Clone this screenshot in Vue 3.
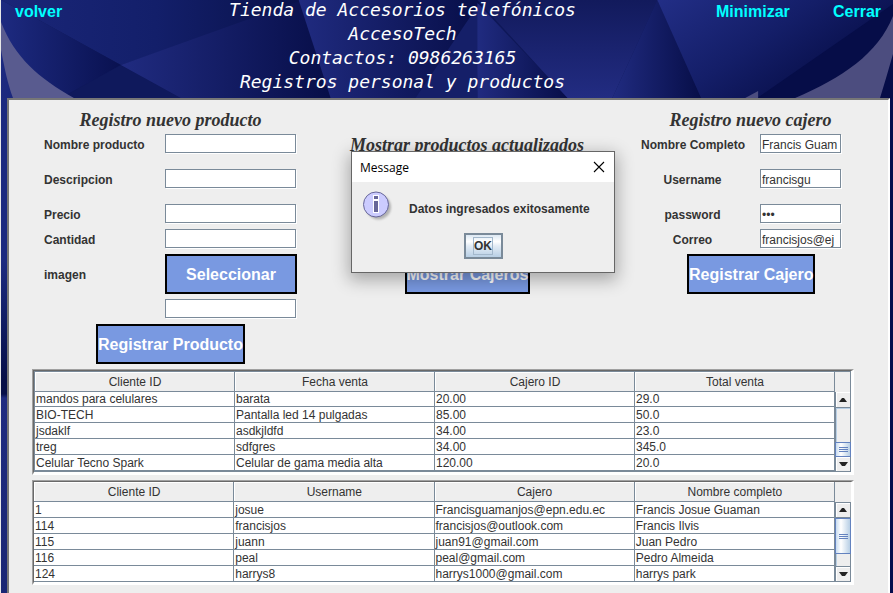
<script setup>
import { ref } from 'vue'

const productFields = [
  { id: 'nombre-producto', label: 'Nombre producto' },
  { id: 'descripcion', label: 'Descripcion' },
  { id: 'precio', label: 'Precio' },
  { id: 'cantidad', label: 'Cantidad' },
]

const cashierFields = ref([
  { id: 'nombre-completo', label: 'Nombre Completo', type: 'text', value: 'Francis Guam' },
  { id: 'username', label: 'Username', type: 'text', value: 'francisgu' },
  { id: 'password', label: 'password', type: 'password', value: '123' },
  { id: 'correo', label: 'Correo', type: 'text', value: 'francisjos@ej' },
])

const tables = [
  {
    name: 'productos',
    head: ['Cliente ID', 'Fecha venta', 'Cajero ID', 'Total venta'],
    rows: [
      ['mandos para celulares', 'barata', '20.00', '29.0'],
      ['BIO-TECH', 'Pantalla led 14 pulgadas', '85.00', '50.0'],
      ['jsdaklf', 'asdkjldfd', '34.00', '23.0'],
      ['treg', 'sdfgres', '34.00', '345.0'],
      ['Celular Tecno Spark', 'Celular de gama media alta', '120.00', '20.0'],
    ],
  },
  {
    name: 'cajeros',
    head: ['Cliente ID', 'Username', 'Cajero', 'Nombre completo'],
    rows: [
      ['1', 'josue', 'Francisguamanjos@epn.edu.ec', 'Francis Josue Guaman'],
      ['114', 'francisjos', 'francisjos@outlook.com', 'Francis Ilvis'],
      ['115', 'juann', 'juan91@gmail.com', 'Juan Pedro'],
      ['116', 'peal', 'peal@gmail.com', 'Pedro Almeida'],
      ['124', 'harrys8', 'harrys1000@gmail.com', 'harrys park'],
    ],
  },
]

const dialogOpen = ref(true)
</script>

<template>
  <div class="page">
    <header class="header">
      <svg class="backdrop" viewBox="0 0 893 98" preserveAspectRatio="none" aria-hidden="true">
        <defs>
          <linearGradient id="g1"><stop offset="0" stop-color="#1d2a80" /><stop offset="1" stop-color="#091150" /></linearGradient>
          <linearGradient id="g2"><stop offset="0" stop-color="#1a2678" /><stop offset=".5" stop-color="#131f6a" /><stop offset="1" stop-color="#081048" /></linearGradient>
          <linearGradient id="g3"><stop offset="0" stop-color="#202b80" /><stop offset="1" stop-color="#070e48" /></linearGradient>
          <linearGradient id="g4" x1="0" y1="0" x2="0" y2="1"><stop offset="0" stop-color="#121a5c" /><stop offset="1" stop-color="#222c82" /></linearGradient>
          <linearGradient id="g5" x1="0" y1="0" x2="1" y2=".6"><stop offset="0" stop-color="#222e86" /><stop offset=".5" stop-color="#141e68" /><stop offset="1" stop-color="#050b42" /></linearGradient>
        </defs>
        <rect width="893" height="98" fill="#0e1758" />
        <polygon points="0,0 310,0 120,65 38,20" fill="url(#g2)" />
        <polygon points="0,0 38,20 120,65 60,98 0,98" fill="url(#g1)" />
        <polygon points="120,65 60,98 180,98" fill="#0f195c" />
        <polygon points="120,65 310,-3 330,98 180,98" fill="url(#g3)" />
        <polygon points="298,0 480,0 477,98 330,98" fill="url(#g3)" />
        <polygon points="415,98 479,3 477,98" fill="#151f68" />
        <polygon points="477,0 657,0 612,98 567,98" fill="url(#g4)" />
        <polygon points="477,3 567,98 477,98" fill="url(#g3)" />
        <polygon points="657,0 701,98 612,98" fill="url(#g3)" />
        <polygon points="657,0 893,0 893,98 701,98" fill="url(#g5)" />
        <polygon points="893,4 893,98 757,98" fill="#060d48" />
        <path d="M0 22 C14 58 38 78 73 98 L12 98 C6 82 3 65 0 50Z" fill="#595b8f" />
        <path d="M893 16 C878 54 842 78 795 98 L880 98 C885 82 889 68 893 54Z" fill="#4c4d7f" />
        <path d="M745 98 L758 91 L758 98Z" fill="#4c4d7f" />
      </svg>
      <a class="nav-link" href="#volver">volver</a>
      <h1 class="title">
        <span>Tienda de Accesorios telefónicos</span>
        <span>AccesoTech</span>
        <span>Contactos: 0986263165</span>
        <span>Registros personal y productos</span>
      </h1>
      <nav class="window-links">
        <a class="nav-link" href="#minimizar">Minimizar</a>
        <a class="nav-link" href="#cerrar">Cerrar</a>
      </nav>
    </header>

    <main class="panel">
      <div class="forms">
        <form class="product" @submit.prevent>
          <h2 class="heading">Registro nuevo producto</h2>
          <div class="fields">
            <template v-for="f in productFields" :key="f.id">
              <label :for="f.id">{{ f.label }}</label>
              <input :id="f.id" type="text" />
            </template>
            <label class="tall" for="imagen">imagen</label>
            <button class="action" type="button">Seleccionar</button>
            <input id="imagen" class="second" type="text" />
          </div>
          <button class="action submit" type="submit">Registrar Producto</button>
        </form>

        <section class="middle">
          <h2 class="heading">Mostrar productos actualizados</h2>
          <button class="action" type="button">Mostrar Cajeros</button>

          <div v-if="dialogOpen" class="dialog" role="dialog" aria-labelledby="dialog-title">
            <div class="dialog-bar">
              <span id="dialog-title">Message</span>
              <button class="close" type="button" aria-label="Close" @click="dialogOpen = false">
                <svg width="12" height="12" viewBox="0 0 12 12"><path d="M1 1L11 11M11 1L1 11" stroke="#000" stroke-width="1.1" fill="none" /></svg>
              </button>
            </div>
            <div class="dialog-body">
              <svg class="info" width="32" height="32" viewBox="0 0 32 32" aria-hidden="true">
                <defs>
                  <filter id="soft" x="-30%" y="-30%" width="160%" height="160%"><feGaussianBlur stdDeviation="1.2" /></filter>
                </defs>
                <circle cx="15.5" cy="16" r="12.5" fill="#777" opacity=".5" filter="url(#soft)" />
                <circle cx="13" cy="13.5" r="12.5" fill="#ccccff" stroke="#666699" />
                <path d="M10 4h6v5h-6zM10 9h6v13h-6z" fill="#fff" />
                <path d="M11 5h4v3h-4zM11 10h4v11h-4z" fill="#666699" />
              </svg>
              <p>Datos ingresados exitosamente</p>
            </div>
            <button class="ok" type="button" @click="dialogOpen = false"><span>OK</span></button>
          </div>
        </section>

        <form class="cashier" @submit.prevent>
          <h2 class="heading">Registro nuevo cajero</h2>
          <div class="fields">
            <template v-for="f in cashierFields" :key="f.id">
              <label :for="f.id">{{ f.label }}</label>
              <input :id="f.id" v-model="f.value" :type="f.type" />
            </template>
          </div>
          <button class="action submit" type="submit">Registrar Cajero</button>
        </form>
      </div>

      <div class="tables">
        <div v-for="t in tables" :key="t.name" class="pane" :class="t.name">
          <div class="frame">
            <table>
              <thead>
                <tr><th v-for="h in t.head" :key="h">{{ h }}</th></tr>
              </thead>
              <tbody>
                <tr v-for="r in t.rows" :key="r[0]"><td v-for="(c, i) in r" :key="i">{{ c }}</td></tr>
              </tbody>
            </table>
            <div class="side">
              <div class="corner"></div>
              <div class="scroll">
                <button class="arrow" type="button" aria-label="Subir">
                  <svg width="8" height="4" viewBox="0 0 8 4"><path d="M0 4L3 0H5L8 4Z" fill="#222" /></svg>
                </button>
                <div class="track"><div class="thumb"><i></i><i></i><i></i></div></div>
                <button class="arrow down" type="button" aria-label="Bajar">
                  <svg width="9" height="4" viewBox="0 0 9 4"><path d="M0 0H9L6 4H3Z" fill="#222" /></svg>
                </button>
              </div>
            </div>
          </div>
        </div>
      </div>
    </main>
  </div>
</template>

<style>
body {
  margin: 0;
}
</style>

<style scoped>
* {
  box-sizing: border-box;
}

.page {
  display: flex;
  flex-direction: column;
  min-height: 100vh;
  overflow: hidden;
  border-left: 1px solid #e8e8e8;
  background: linear-gradient(#1c2a80 98px, #1c2a80 260px, #070f48 380px, #070f48 394px, #1f2b80 398px, #1a2674);
  font-family: "Liberation Sans", Arial, sans-serif;
  font-size: 12px;
  color: #333;
}

h1,
h2,
p {
  margin: 0;
}

.header {
  position: relative;
  display: grid;
  grid-template-columns: 88px 1fr 177px;
  height: 98px;
}

.backdrop {
  position: absolute;
  inset: 0;
  width: 100%;
  height: 100%;
}

.nav-link {
  position: relative;
  color: #0ff;
  font-size: 16px;
  font-weight: bold;
  line-height: 24px;
  text-decoration: none;
}

.header > .nav-link {
  padding-left: 14px;
}

.window-links {
  display: flex;
  justify-content: space-between;
  padding-right: 12px;
}

.title {
  position: relative;
  display: flex;
  flex-direction: column;
  justify-content: center;
  height: 92px;
  font-family: "DejaVu Sans Mono", monospace;
  font-size: 18px;
  font-style: italic;
  font-weight: normal;
  line-height: 24px;
  text-align: center;
  white-space: nowrap;
  color: #fff;
}

.panel {
  flex: 1;
  margin: 0 3px 0 6px;
  border: 2px solid #777;
  border-right-color: #fff;
  border-bottom: 0;
  background: #eee;
  box-shadow: 3px 0 0 #050c4c;
}

.forms {
  display: grid;
  grid-template-columns: 253px 1fr 201px;
  padding: 10px 46px 0 35px;
}

.heading {
  height: 24px;
  font-family: "Liberation Serif", "Times New Roman", serif;
  font-size: 18px;
  font-style: italic;
  font-weight: bold;
  line-height: 20px;
  text-align: center;
  white-space: nowrap;
}

.fields {
  display: grid;
  grid-template-rows: 30px 30px 20px 20px 40px;
  row-gap: 5px;
}

.product .fields {
  grid-template-columns: 121px 132px;
  grid-template-rows: 30px 30px 20px 20px 40px 20px;
}

.cashier .fields {
  grid-template-columns: 103px 82px;
  grid-template-rows: 30px 30px 20px 20px;
  column-gap: 16px;
}

.second {
  grid-column: 2;
}

label {
  font-weight: bold;
  line-height: 22px;
  white-space: nowrap;
}

.tall {
  line-height: 42px;
}

.cashier label {
  text-align: center;
}

input {
  width: calc(100% - 1px);
  height: 19px;
  padding: 2px 0 0 1px;
  border: 1px solid #7a8a99;
  border-radius: 0;
  outline: 0;
  background: #fff;
  box-shadow: 1px 1px 0 #fff;
  font: inherit;
  color: #333;
}

.action {
  height: 40px;
  padding: 2px 0 0;
  border: 2px solid #000;
  border-radius: 0;
  background: #7999e1;
  color: #fff;
  font: bold 16px "Liberation Sans", Arial, sans-serif;
  white-space: nowrap;
}

.submit {
  display: block;
  margin: 5px auto 0;
}

.product .submit {
  width: 149px;
}

.cashier .heading {
  padding-left: 18px;
}

.cashier .submit {
  width: 128px;
  margin-right: 27px;
}

.middle {
  position: relative;
  display: flex;
  flex-direction: column;
  align-items: center;
  gap: 95px;
  padding: 25px 4px 0 0;
}

.middle .action {
  width: 125px;
}

.dialog {
  position: absolute;
  top: 41px;
  left: 54px;
  width: 264px;
  border: 1px solid #666;
  background: #eee;
  box-shadow: 0 5px 16px 2px rgba(0, 0, 0, 0.3);
  padding-bottom: 13px;
}

.dialog-bar {
  display: flex;
  align-items: center;
  justify-content: space-between;
  height: 30px;
  padding: 0 9px 0 8px;
  background: #fff;
  color: #000;
  font-family: "Open Sans", "Noto Sans", sans-serif;
}

.close {
  display: flex;
  padding: 0;
  border: 0;
  background: none;
}

.dialog-body {
  display: flex;
  gap: 14px;
  padding: 9px 0 0 11px;
}

.dialog-body p {
  font-weight: bold;
  line-height: 36px;
}

.ok {
  display: flex;
  align-items: center;
  justify-content: center;
  width: 39px;
  height: 26px;
  margin: 6px auto 0;
  padding: 0;
  border: 2px solid #7a8a99;
  border-radius: 0;
  background: linear-gradient(#dde8f3, #fff 30%, #e3ecf5 50%, #b8cfe5);
  color: #333;
  font: bold 12px "Liberation Sans", Arial, sans-serif;
}

.ok span {
  border: 1px solid #a3b8cc;
  line-height: 16px;
}

.tables {
  display: grid;
  gap: 5px;
  padding: 5px 34px 8px 23px;
}

.pane {
  border: 1px solid #fff;
  border-top-color: #a0a0a0;
  border-left-color: #a0a0a0;
}

.frame {
  display: flex;
  border-top: 1px solid #696969;
  border-left: 1px solid #696969;
  border-right: 2px solid #fff;
  border-bottom: 2px solid #fff;
  background: #fff;
}

.productos .side,
.productos table {
  border-top: 1px solid #7a8a99;
  border-bottom: 1px solid #7a8a99;
}

.productos table {
  border-left: 1px solid #7a8a99;
}

table {
  flex: 1;
  width: 100%;
  min-width: 0;
  table-layout: fixed;
  border-collapse: separate;
  border-spacing: 0;
}

th,
td {
  overflow: hidden;
  height: 16px;
  padding: 2px 0 0 1px;
  border-right: 1px solid #7a8a99;
  border-bottom: 1px solid #7a8a99;
  line-height: 13px;
  white-space: nowrap;
}

th {
  height: 20px;
  background: #eee;
  box-shadow: inset 1px 1px 0 #fff;
  font-weight: normal;
  line-height: 17px;
}

.productos tbody tr:first-child td {
  height: 15px;
  padding-top: 1px;
}

.side {
  display: flex;
  flex: none;
  flex-direction: column;
  width: 16px;
}

.corner {
  height: 20px;
  background: #eee;
}

.productos .corner {
  border-right: 1px solid #7a8a99;
}

.scroll {
  display: flex;
  flex: 1;
  flex-direction: column;
  border-left: 1px solid #7a8a99;
  border-right: 1px solid #7a8a99;
  background: #eee;
}

.cajeros .scroll {
  border-top: 1px solid #7a8a99;
}

.arrow {
  display: flex;
  align-items: center;
  justify-content: center;
  height: 16px;
  padding: 0;
  border: 0;
  border-bottom: 1px solid #7a8a99;
  border-radius: 0;
  background: #eee;
  box-shadow: inset 1px 1px 0 #fff;
}

.cajeros .arrow {
  height: 15px;
}

.productos .down {
  height: 14px;
  border-bottom: 0;
}

.cajeros .down {
  height: 16px;
  border-top: 1px solid #7a8a99;
}

.track {
  display: flex;
  flex: 1;
  flex-direction: column;
  box-shadow: inset 1px 1px 0 #b8cfe5;
}

.productos .track {
  justify-content: flex-end;
}

.thumb {
  display: flex;
  flex-direction: column;
  align-items: center;
  justify-content: center;
  gap: 1px;
  height: 15px;
  margin: 0 -1px;
  border: 1px solid #6382bf;
  background: linear-gradient(90deg, #c8dcf0, #fff 35%, #b8cfe5);
}

.cajeros .thumb {
  height: 36px;
}

.thumb i {
  width: 9px;
  height: 1px;
  background: #6382bf;
}
</style>
